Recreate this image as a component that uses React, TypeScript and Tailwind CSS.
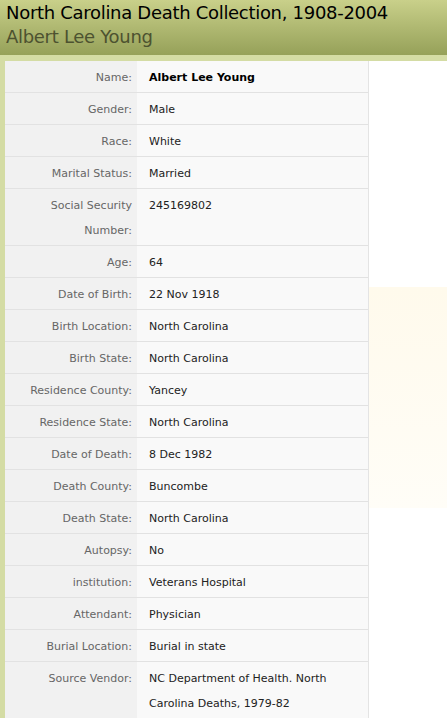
import React from "react";

const rows: { label: string; value: string; bold?: boolean }[] = [
  { label: "Name:", value: "Albert Lee Young", bold: true },
  { label: "Gender:", value: "Male" },
  { label: "Race:", value: "White" },
  { label: "Marital Status:", value: "Married" },
  { label: "Social Security Number:", value: "245169802" },
  { label: "Age:", value: "64" },
  { label: "Date of Birth:", value: "22 Nov 1918" },
  { label: "Birth Location:", value: "North Carolina" },
  { label: "Birth State:", value: "North Carolina" },
  { label: "Residence County:", value: "Yancey" },
  { label: "Residence State:", value: "North Carolina" },
  { label: "Date of Death:", value: "8 Dec 1982" },
  { label: "Death County:", value: "Buncombe" },
  { label: "Death State:", value: "North Carolina" },
  { label: "Autopsy:", value: "No" },
  { label: "institution:", value: "Veterans Hospital" },
  { label: "Attendant:", value: "Physician" },
  { label: "Burial Location:", value: "Burial in state" },
  { label: "Source Vendor:", value: "NC Department of Health. North Carolina Deaths, 1979-82" },
];

export default function App() {
  return (
    <div className="w-[447px] h-[724px] overflow-hidden bg-white" style={{ fontFamily: '"DejaVu Sans", Verdana, sans-serif' }}>
      <div className="h-[55px] bg-gradient-to-b from-[#c9d08a] to-[#96a159] px-[6px] pt-[1px]">
        <div className="text-[18px] leading-[24px] text-black tracking-[-0.3px] whitespace-nowrap">North Carolina Death Collection, 1908-2004</div>
        <div className="text-[18px] leading-[24px] text-[#4d5230] tracking-[-0.3px]">Albert Lee Young</div>
      </div>
      <div className="h-[6px] bg-[#d4dca4]" />
      <div className="flex">
        <div className="w-[5px] bg-[#d4dca4] h-[657px]" />
        <div className="w-[364px] border-r border-[#e4e4e4]">
          {rows.map((r, i) => (
            <div key={i} className={`flex ${i < rows.length - 1 ? "border-b border-[#e2e2e2]" : ""}`}>
              <div className="w-[132px] shrink-0 bg-[#f1f1f1] text-right pr-[5px] pl-2 pt-[4px] pb-[2px] text-[11px] leading-[25px] text-[#666666]">
                {r.label}
              </div>
              <div className={`flex-1 bg-[#f9f9f9] pl-[12px] pr-2 pt-[4px] pb-[2px] text-[11px] leading-[25px] text-[#222222] ${r.bold ? "font-bold text-black" : ""}`}>
                {r.value}
              </div>
            </div>
          ))}
        </div>
        <div className="mt-[226px] h-[221px] flex-1 bg-gradient-to-b from-[#fffaec] to-[#fffdf7]" />
      </div>
    </div>
  );
}
